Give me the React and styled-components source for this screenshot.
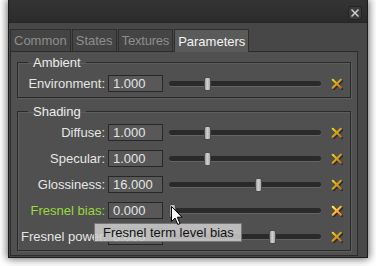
import React from "react";
import styled, { createGlobalStyle } from "styled-components";

const Global = createGlobalStyle`
  html, body { margin: 0; padding: 0; background: #ffffff; }
  body { font-family: "Liberation Sans", Arial, sans-serif; font-size: 13px; }
  * { box-sizing: border-box; }
`;

const Screen = styled.div`
  position: relative;
  width: 376px;
  height: 266px;
  overflow: hidden;
  background: #ffffff;
  padding: 0 8px 8px 8px;
`;

const Window = styled.div`
  width: 360px;
  height: 258px;
  display: flex;
  flex-direction: column;
  background: #474747;
  border: 1px solid #1c1c1c;
  border-top: none;
  box-shadow: 0 0 8px 1px rgba(0, 0, 0, 0.6);
`;

const TitleBar = styled.div`
  height: 23px;
  flex: none;
  display: flex;
  justify-content: flex-end;
  align-items: flex-start;
  padding: 6px 5px 0 0;
  background: linear-gradient(#343434, #2b2b2b);
  border-bottom: 1px solid #262626;
`;

const CloseButton = styled.div`
  width: 14px;
  height: 14px;
  display: flex;
  align-items: center;
  justify-content: center;
  background: #3b3b3b;
  border: 1px solid #232323;
  border-radius: 3px;
`;

const Body = styled.div`
  flex: 1;
  display: flex;
  flex-direction: column;
  padding: 6px 9px 1px 1px;
`;

const TabBar = styled.div`
  display: flex;
  gap: 1px;
  height: 22px;
  flex: none;
  align-items: flex-end;
`;

const Tab = styled.div`
  height: ${(p) => (p.$active ? 23 : 22)}px;
  padding: 0 3px;
  display: flex;
  align-items: center;
  border: 1px solid #2e2e2e;
  border-bottom: none;
  background: ${(p) => (p.$active ? "#5a5a5a" : "#444444")};
  color: ${(p) => (p.$active ? "#f4f4f4" : "#8e8e8e")};
  font-size: 13px;
  letter-spacing: ${(p) => (p.$tight ? "-0.2px" : "0")};
  margin-bottom: ${(p) => (p.$active ? -1 : 0)}px;
  position: relative;
`;

const Pane = styled.div`
  flex: 1;
  display: flex;
  flex-direction: column;
  gap: 6px;
  border: 1px solid #2b2b2b;
  background: #505050;
  padding: 3px 6px 0 6px;
`;

const Group = styled.fieldset`
  margin: 0;
  min-width: 0;
  padding: 5px 7px 5px 3px;
  border: 1px solid #2a2a2a;
  box-shadow: inset 1px 1px 0 #5d5d5d, 1px 1px 0 #5d5d5d;
  display: flex;
  flex-direction: column;
  gap: 9px;
`;

const Legend = styled.legend`
  margin-left: 7px;
  padding: 0 5px;
  color: #ececec;
  font-size: 13px;
  line-height: 15px;
`;

const Row = styled.div`
  display: flex;
  align-items: center;
  height: 17px;
`;

const Label = styled.div`
  width: 84px;
  flex: none;
  text-align: right;
  white-space: nowrap;
  color: ${(p) => (p.$highlight ? "#9ad93c" : "#e6e6e6")};
  font-size: 13px;
`;

const Field = styled.div`
  width: 55px;
  height: 17px;
  flex: none;
  margin-left: 3px;
  padding: 0 4px;
  border: 1px solid #272727;
  background: #585858;
  color: #e4e4e4;
  font-size: 13px;
  line-height: 15px;
`;

const Slider = styled.div`
  position: relative;
  flex: 1;
  height: 17px;
  margin-left: 6px;
  display: flex;
  align-items: center;
`;

const Track = styled.div`
  width: 100%;
  height: 5px;
  border-radius: 3px;
  background: #2a2a2a;
  box-shadow: 0 1px 0 #646464;
`;

const Handle = styled.div`
  position: absolute;
  top: 2px;
  width: 7px;
  height: 14px;
  border-radius: 2px;
  border: 1px solid #4a4a4a;
  background: linear-gradient(90deg, #9a9a9a, #d2d2d2 45%, #a6a6a6);
`;

const ClearBox = styled.div`
  width: 12px;
  height: 12px;
  flex: none;
  margin-left: 10px;
  display: flex;
`;

const Tooltip = styled.div`
  position: absolute;
  left: 94px;
  top: 223px;
  width: 148px;
  height: 19px;
  padding-left: 8px;
  background: rgba(206, 206, 206, 0.86);
  border: 1px solid rgba(110, 110, 110, 0.9);
  color: #111111;
  font-size: 13px;
  line-height: 17px;
  white-space: nowrap;
`;

const Cursor = styled.svg`
  position: absolute;
  left: 171px;
  top: 206px;
`;

const ClearIcon = ({ hot, id }) => (
  <ClearBox>
    <svg width="12" height="12" viewBox="0 0 12 12">
      <defs>
        <linearGradient id={id} x1="0" y1="0" x2="1" y2="1">
          <stop offset="0" stopColor={hot ? "#fff35a" : "#e8d21e"} />
          <stop offset="1" stopColor={hot ? "#ff7a10" : "#c46a18"} />
        </linearGradient>
      </defs>
      <g stroke="rgba(0,0,0,0.45)" strokeWidth="2.4" strokeLinecap="round">
        <path d="M3 3 L11 11" />
        <path d="M11 3 L3 11" />
      </g>
      <g stroke={`url(#${id})`} strokeWidth="2.2" strokeLinecap="round">
        <path d="M1.8 1.8 L9.8 9.8" />
        <path d="M9.8 1.8 L1.8 9.8" />
      </g>
    </svg>
  </ClearBox>
);

const rows = [
  { label: "Diffuse:", value: "1.000", pos: 0.24 },
  { label: "Specular:", value: "1.000", pos: 0.24 },
  { label: "Glossiness:", value: "16.000", pos: 0.596 },
  { label: "Fresnel bias:", value: "0.000", pos: 0, hot: true },
  { label: "Fresnel power:", value: "5.000", pos: 0.69 },
];

const ParamRow = ({ label, value, pos, hot, id }) => (
  <Row>
    <Label $highlight={hot}>{label}</Label>
    <Field>{value}</Field>
    <Slider>
      <Track />
      <Handle style={{ left: `calc((100% - 7px) * ${pos})` }} />
    </Slider>
    <ClearIcon hot={hot} id={id} />
  </Row>
);

export default function App() {
  return (
    <>
      <Global />
      <Screen>
        <Window>
          <TitleBar>
            <CloseButton>
              <svg width="10" height="10" viewBox="0 0 10 10">
                <path d="M1.5 1.5 L8.5 8.5 M8.5 1.5 L1.5 8.5" stroke="#d0d0d0" strokeWidth="1.5" />
              </svg>
            </CloseButton>
          </TitleBar>
          <Body>
            <TabBar>
              <Tab>Common</Tab>
              <Tab>States</Tab>
              <Tab $tight>Textures</Tab>
              <Tab $active>Parameters</Tab>
            </TabBar>
            <Pane>
              <Group>
                <Legend>Ambient</Legend>
                <ParamRow label="Environment:" value="1.000" pos={0.24} id="g-env" />
              </Group>
              <Group>
                <Legend>Shading</Legend>
                {rows.map((r, i) => (
                  <ParamRow key={r.label} {...r} id={`g-${i}`} />
                ))}
              </Group>
            </Pane>
          </Body>
        </Window>
        <Tooltip>Fresnel term level bias</Tooltip>
        <Cursor width="13" height="20" viewBox="0 0 13 20">
          <path d="M0.5 0.5 L0.5 15.5 L4 12 L6.8 18.5 L9 17.5 L6.3 11.2 L11 11.2 Z" fill="#ffffff" stroke="#000000" strokeWidth="1" />
        </Cursor>
      </Screen>
    </>
  );
}
